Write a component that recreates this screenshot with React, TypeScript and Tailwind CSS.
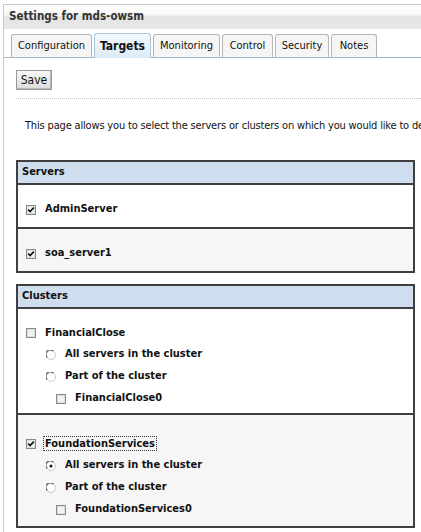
import React from "react";

const FONT = "font-['DejaVu_Sans_Condensed','Liberation_Sans',sans-serif]";

function CheckBox({ checked }: { checked?: boolean }) {
  return (
    <svg width="10" height="10" viewBox="0 0 10 10" className="shrink-0">
      <rect x="0.5" y="0.5" width="9" height="9" fill="#ffffff" stroke="#8a8a8a" />
      <rect x="1.5" y="1.5" width="7" height="7" fill="#f2f2f2" stroke="#dedede" />
      {checked && (
        <path d="M2.2 4.6 L4.1 6.6 L7.8 2.6" fill="none" stroke="#111" strokeWidth="1.6" />
      )}
    </svg>
  );
}

function Radio({ checked }: { checked?: boolean }) {
  return (
    <svg width="10" height="10" viewBox="0 0 10 10" className="shrink-0">
      <circle cx="5" cy="5" r="4.5" fill="#ffffff" stroke="#c8c8c8" strokeWidth="1" />
      <path d="M1.1 7.3 A4.3 4.3 0 0 1 7.3 1.1" fill="none" stroke="#555" strokeWidth="1.2" />
      {checked && <circle cx="5" cy="5" r="1.5" fill="#111" />}
    </svg>
  );
}

const tabs: { label: string; w: string; active?: boolean }[] = [
  { label: "Configuration", w: "w-[81px]" },
  { label: "Targets", w: "w-[57px]", active: true },
  { label: "Monitoring", w: "w-[67px]" },
  { label: "Control", w: "w-[51px]" },
  { label: "Security", w: "w-[54px]" },
  { label: "Notes", w: "w-[46px]" },
];

function ClusterRow({
  name,
  checked,
  focused,
  allChecked,
  sub,
  bg,
  pt,
  pb,
}: {
  name: string;
  checked?: boolean;
  focused?: boolean;
  allChecked?: boolean;
  sub: string;
  bg: string;
  pt: string;
  pb: string;
}) {
  return (
    <div className={`${bg} ${pt} ${pb} pl-[8px] flex flex-col`}>
      <div className="h-[22px] flex items-center gap-[9px]">
        <CheckBox checked={checked} />
        <span
          className={`font-bold text-[11px] leading-[13px] text-[#111] ${
            focused ? "outline outline-1 outline-dotted outline-[#333] outline-offset-0 px-[1px] -ml-[1px]" : ""
          }`}
        >
          {name}
        </span>
      </div>
      <div className="h-[22px] flex items-center gap-[9px] pl-[20px]">
        <Radio checked={allChecked} />
        <span className="font-bold text-[11px] text-[#111]">All servers in the cluster</span>
      </div>
      <div className="h-[22px] flex items-center gap-[9px] pl-[20px]">
        <Radio />
        <span className="font-bold text-[11px] text-[#111]">Part of the cluster</span>
      </div>
      <div className="h-[22px] flex items-center gap-[9px] pl-[30px]">
        <CheckBox />
        <span className="font-bold text-[11px] text-[#111]">{sub}</span>
      </div>
    </div>
  );
}

export default function App() {
  return (
    <div className={`w-[421px] h-[532px] bg-white overflow-hidden ${FONT}`}>
      <div className="ml-[3px] mt-[4px] h-[528px] border-l border-t border-[#c3cad4]">
        {/* title */}
        <div className="h-[24px] bg-[linear-gradient(#ffffff_0%,#f7f7f7_40%,#e4e4e4_50%,#e8e8e8_100%)] flex items-center pl-[5px]">
          <span className="font-bold text-[11.5px] text-[#333]">Settings for mds-owsm</span>
        </div>
        {/* tabs */}
        <div className="mt-[4px] h-[25px] pl-[7px] flex items-end gap-[2px] border-b border-[#a7b8c9]">
          {tabs.map((t) =>
            t.active ? (
              <div
                key={t.label}
                className={`${t.w} h-[25px] -mb-[1px] rounded-t-[3px] border border-b-0 border-[#a9c4dc] bg-[linear-gradient(#f2f8fd,#dcebf7)] flex items-center justify-center text-[12px] font-bold text-[#111]`}
              >
                {t.label}
              </div>
            ) : (
              <div
                key={t.label}
                className={`${t.w} h-[23px] rounded-t-[3px] border border-b-0 border-[#b5b5b5] bg-[#f5f5f5] flex items-center justify-center text-[11px] text-[#111]`}
              >
                {t.label}
              </div>
            )
          )}
        </div>
        {/* body */}
        <div className="pl-[12px] pt-[12px]">
          <button className="w-[36px] h-[20px] border border-[#9a9a9a] bg-[linear-gradient(#f8f8f8,#dcdcdc)] text-[12px] text-[#111] flex items-center justify-center shadow-[inset_-1px_-1px_0_#b8b8b8]">
            Save
          </button>
          <div className="mt-[8px] border-t border-dotted border-[#c4c4c4]" />
          <div className="mt-[19px] pl-[9px] text-[11px] tracking-[-0.17px] text-[#111] whitespace-nowrap">
            This page allows you to select the servers or clusters on which you would like to de
          </div>

          {/* Servers */}
          <div className="mt-[25px] w-[399px] border-2 border-[#3f3f3f]">
            <div className="h-[21px] bg-[#cfdeef] flex items-center pl-[4px] font-bold text-[11px] text-[#111]">
              Servers
            </div>
            <div className="h-[44px] border-t-2 border-[#3f3f3f] bg-white flex items-center gap-[9px] pl-[8px] pt-[8px]">
              <CheckBox checked />
              <span className="font-bold text-[11px] text-[#111]">AdminServer</span>
            </div>
            <div className="h-[44px] border-t-2 border-[#3f3f3f] bg-[#f6f6f6] flex items-center gap-[9px] pl-[8px] pt-[8px]">
              <CheckBox checked />
              <span className="font-bold text-[11px] text-[#111]">soa_server1</span>
            </div>
          </div>

          {/* Clusters */}
          <div className="mt-[11px] w-[399px] border-2 border-[#3f3f3f]">
            <div className="h-[21px] bg-[#cfdeef] flex items-center pl-[4px] font-bold text-[11px] text-[#111]">
              Clusters
            </div>
            <div className="border-t-2 border-[#3f3f3f]">
              <ClusterRow
                name="FinancialClose"
                sub="FinancialClose0"
                bg="bg-white"
                pt="pt-[13px]"
                pb="pb-[3px]"
              />
            </div>
            <div className="border-t-2 border-[#3f3f3f]">
              <ClusterRow
                name="FoundationServices"
                checked
                focused
                allChecked
                sub="FoundationServices0"
                bg="bg-[#f6f6f6]"
                pt="pt-[18px]"
                pb="pb-[5px]"
              />
            </div>
          </div>
        </div>
      </div>
    </div>
  );
}
